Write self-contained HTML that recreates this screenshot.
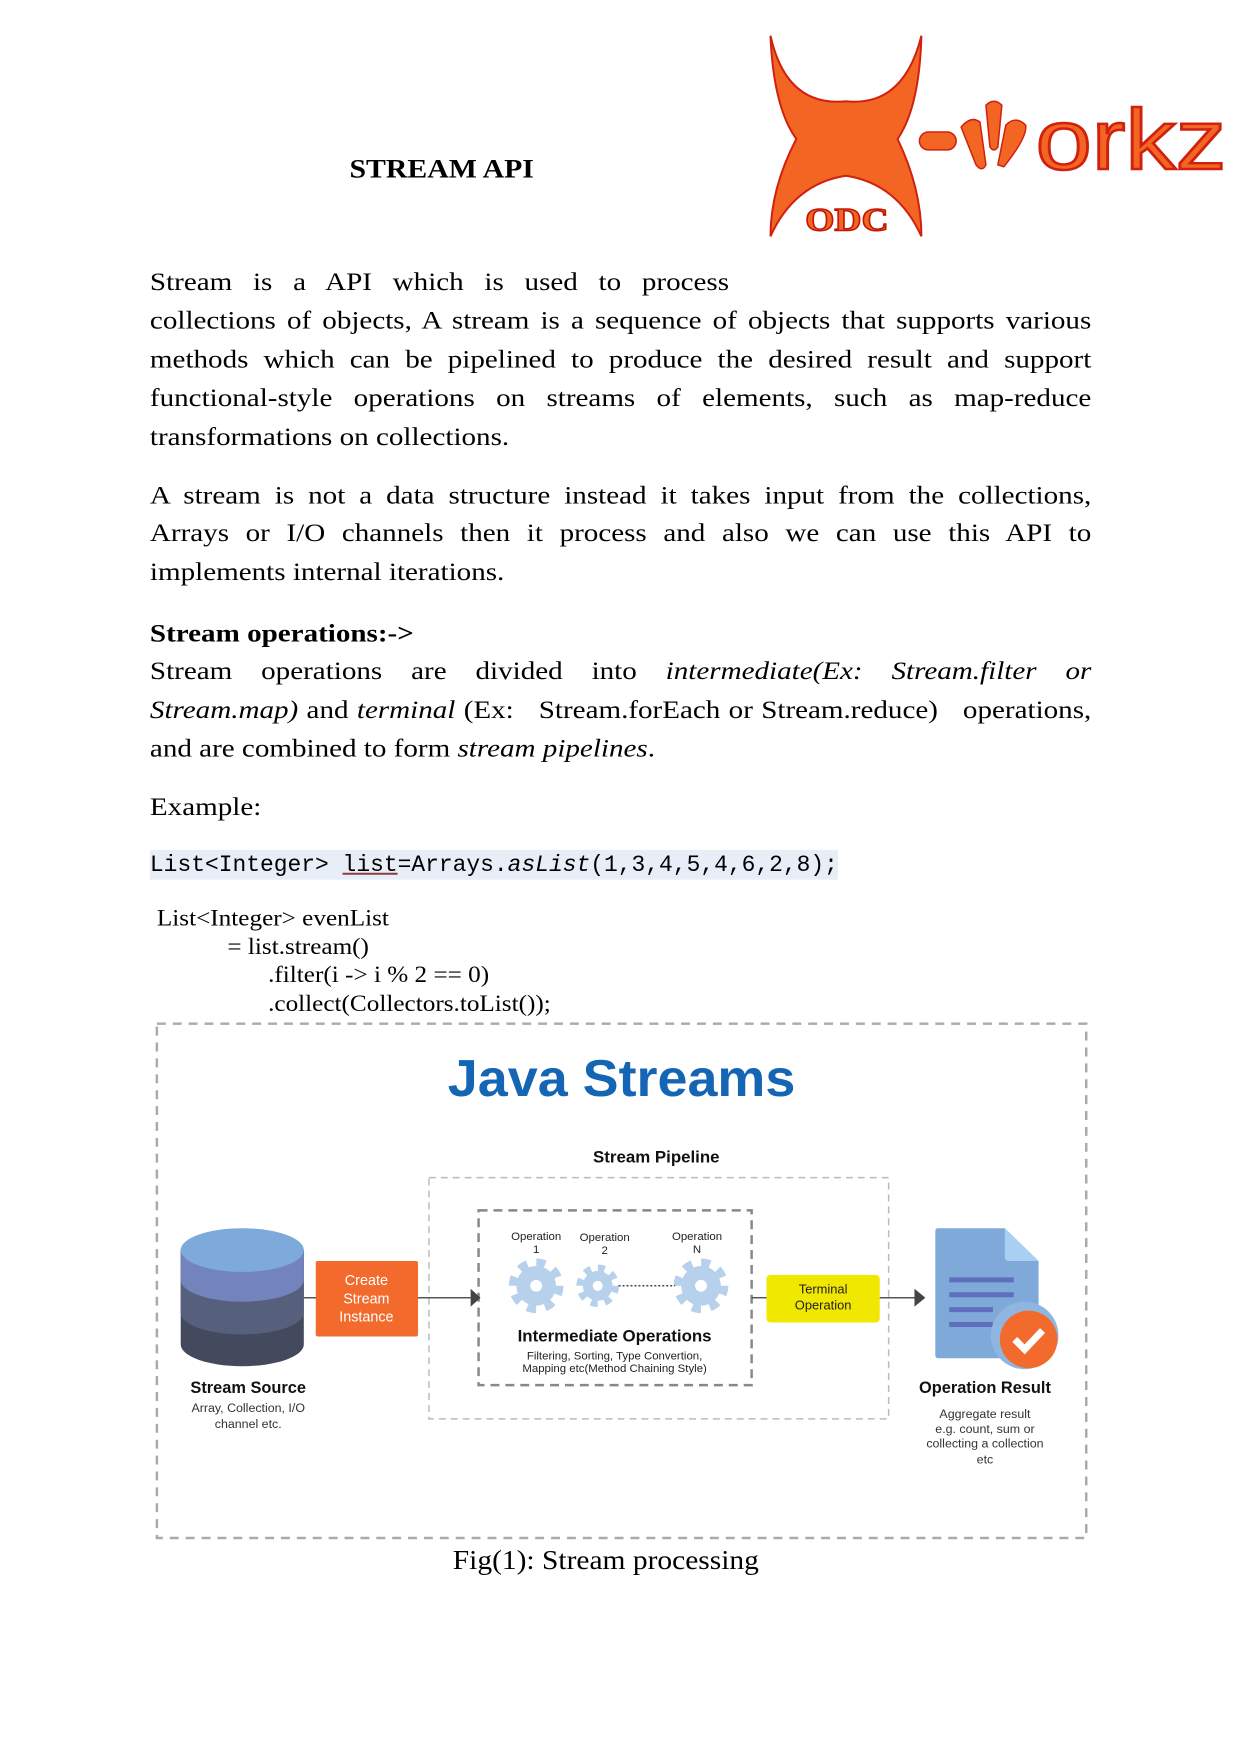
<!DOCTYPE html>
<html><head><meta charset="utf-8"><style>
html,body{margin:0;padding:0;background:#fff}
body{width:1241px;height:1755px;position:relative;overflow:hidden;font-family:"Liberation Serif",serif;color:#000}
#w{position:absolute;left:0;top:0;width:1250px;height:1768px;transform-origin:0 0;transform:scale(0.9929)}
.l{position:absolute;left:151px;width:842px;font-size:26px;line-height:30px;white-space:nowrap;transform-origin:0 0;transform:scaleX(1.126)}
.j{text-align:justify;text-align-last:justify;white-space:normal}
.c{position:absolute;font-size:23.5px;line-height:28px;white-space:nowrap;transform-origin:0 0;transform:scaleX(1.08)}
svg text{font-family:"Liberation Sans",sans-serif}
</style></head><body><div id="w">

<div style="position:absolute;left:352px;top:155px;font-size:27px;font-weight:bold;line-height:30px;transform-origin:0 0;transform:scaleX(1.11);white-space:nowrap">STREAM API</div>

<svg style="position:absolute;left:0;top:0" width="1250" height="260">
<path d="M776 36 Q792 108 852 102 Q910 108 928 36 Q926 108 904 140 Q928 190 928 238 Q904 185 852 177 Q800 185 776 238 Q776 190 802 140 Q779 108 776 36Z" fill="#f26522" stroke="#d02010" stroke-width="2"/>
<text x="853" y="232" text-anchor="middle" font-size="33" font-weight="bold" style="font-family:'Liberation Serif',serif" fill="#f26522" stroke="#c01808" stroke-width="1.5" textLength="84" lengthAdjust="spacingAndGlyphs">ODC</text>
<rect x="926" y="133" width="37" height="18" rx="9" fill="#f26522" stroke="#d02010" stroke-width="1.5"/>
<path d="M968 128 Q978 116 987 123 L993 166 Q989 174 983 166 Z" fill="#f26522" stroke="#d02010" stroke-width="1.5"/>
<path d="M993 106 Q1001 98 1009 106 L1005 148 Q1001 154 997 148 Z" fill="#f26522" stroke="#d02010" stroke-width="1.5"/>
<path d="M1005 166 L1013 126 Q1023 116 1033 126 Q1035 138 1011 168 Z" fill="#f26522" stroke="#d02010" stroke-width="1.5"/>
<text x="1043" y="170" font-size="86" textLength="192" lengthAdjust="spacingAndGlyphs" fill="#f26522" stroke="#d02010" stroke-width="2.5">orkz</text>
</svg>

<div class="l j" style="top:269px;width:518px">Stream is a API which is used to process</div>
<div class="l j" style="top:308px">collections of objects, A stream is a sequence of objects that supports various</div>
<div class="l j" style="top:347px">methods which can be pipelined to produce the desired result and support</div>
<div class="l j" style="top:386px">functional-style operations on streams of elements, such as map-reduce</div>
<div class="l" style="top:425px">transformations on collections.</div>

<div class="l j" style="top:484px">A stream is not a data structure instead it takes input from the collections,</div>
<div class="l j" style="top:522px">Arrays or I/O channels then it process and also we can use this API to</div>
<div class="l" style="top:561px">implements internal iterations.</div>

<div class="l" style="top:623px;font-weight:bold">Stream operations:-&gt;</div>
<div class="l j" style="top:661px">Stream operations are divided into <i>intermediate(Ex: Stream.filter or</i></div>
<div class="l j" style="top:700px"><i>Stream.map)</i> and <i>terminal</i> (Ex: &nbsp; Stream.forEach or Stream.reduce) &nbsp; operations,</div>
<div class="l" style="top:739px">and are combined to form <i>stream pipelines</i>.</div>

<div class="l" style="top:798px">Example:</div>

<div style="position:absolute;left:151px;top:856px;width:693px;height:30px;background:#e8eef7"></div>
<div style="position:absolute;left:151px;top:856px;font-family:'Liberation Mono',monospace;font-size:23px;line-height:30px;white-space:nowrap;transform-origin:0 0;transform:scaleX(1.004)">List&lt;Integer&gt; <u style="text-decoration-color:#8b3a3a">list</u>=Arrays.<i>asList</i>(1,3,4,5,4,6,2,8);</div>

<div class="c" style="left:158px;top:911px">List&lt;Integer&gt; evenList</div>
<div class="c" style="left:229px;top:940px">= list.stream()</div>
<div class="c" style="left:270px;top:968px">.filter(i -&gt; i % 2 == 0)</div>
<div class="c" style="left:270px;top:997px">.collect(Collectors.toList());</div>

<svg style="position:absolute;left:0;top:0" width="1250" height="1768">
<rect x="158" y="1031" width="936" height="518" fill="none" stroke="#aaa" stroke-width="2.5" stroke-dasharray="9 7"/>
<text x="626" y="1104" text-anchor="middle" font-size="52" font-weight="bold" fill="#1565b5" textLength="350" lengthAdjust="spacingAndGlyphs">Java Streams</text>
<text x="661" y="1171" text-anchor="middle" font-size="17" font-weight="bold" fill="#111">Stream Pipeline</text>
<rect x="432" y="1186" width="463" height="243" fill="none" stroke="#bbb" stroke-width="1.5" stroke-dasharray="7 5"/>
<rect x="482" y="1219" width="275" height="176" fill="none" stroke="#888" stroke-width="2.5" stroke-dasharray="9 6"/>

<path d="M182 1259 L182 1354 A62 22 0 0 0 306 1354 L306 1259Z" fill="#434a5e"/>
<path d="M182 1259 L182 1322 A62 22 0 0 0 306 1322 L306 1259Z" fill="#56607d"/>
<path d="M182 1259 L182 1289 A62 22 0 0 0 306 1289 L306 1259Z" fill="#7384bd"/>
<ellipse cx="244" cy="1259" rx="62" ry="22" fill="#7eaadb"/>

<line x1="306" y1="1307" x2="474" y2="1307" stroke="#555" stroke-width="1.5"/>
<path d="M474 1298 L484 1307 L474 1316Z" fill="#444"/>
<rect x="318" y="1270" width="103" height="76" rx="2" fill="#f26b2d"/>
<text fill="#fff" font-size="14.5" text-anchor="middle"><tspan x="369" y="1294">Create</tspan><tspan x="369" y="1313">Stream</tspan><tspan x="369" y="1331">Instance</tspan></text>

<text fill="#222" font-size="11.5" text-anchor="middle"><tspan x="540" y="1249">Operation</tspan><tspan x="540" y="1262">1</tspan><tspan x="609" y="1250">Operation</tspan><tspan x="609" y="1263">2</tspan><tspan x="702" y="1249">Operation</tspan><tspan x="702" y="1262">N</tspan></text>
<g fill="#b7d0ec">
<circle cx="540" cy="1295" r="20"/><circle cx="540" cy="1295" r="23" fill="none" stroke="#b7d0ec" stroke-width="9" stroke-dasharray="9 9.06"/>
<circle cx="602" cy="1295" r="15"/><circle cx="602" cy="1295" r="18" fill="none" stroke="#b7d0ec" stroke-width="7" stroke-dasharray="7 7.14"/>
<circle cx="706" cy="1295" r="20"/><circle cx="706" cy="1295" r="23" fill="none" stroke="#b7d0ec" stroke-width="9" stroke-dasharray="9 9.06"/>
</g>
<circle cx="540" cy="1295" r="6" fill="#fff"/><circle cx="602" cy="1295" r="5" fill="#fff"/><circle cx="706" cy="1295" r="6" fill="#fff"/>
<line x1="623" y1="1295" x2="680" y2="1295" stroke="#444" stroke-width="1.5" stroke-dasharray="2 2"/>
<text x="619" y="1351" text-anchor="middle" font-size="17" font-weight="bold" fill="#111">Intermediate Operations</text>
<text fill="#222" font-size="11.5" text-anchor="middle"><tspan x="619" y="1369">Filtering, Sorting, Type Convertion,</tspan><tspan x="619" y="1382">Mapping etc(Method Chaining Style)</tspan></text>

<line x1="757" y1="1307" x2="772" y2="1307" stroke="#555" stroke-width="1.5"/>
<rect x="772" y="1284" width="114" height="48" rx="4" fill="#f0e800"/>
<text fill="#222" font-size="13" text-anchor="middle"><tspan x="829" y="1303">Terminal</tspan><tspan x="829" y="1319">Operation</tspan></text>
<line x1="886" y1="1307" x2="922" y2="1307" stroke="#555" stroke-width="1.5"/>
<path d="M921 1298 L932 1307 L921 1316Z" fill="#444"/>

<path d="M945 1237 L1012 1237 L1046 1270 L1046 1368 L945 1368 Q942 1368 942 1365 L942 1240 Q942 1237 945 1237Z" fill="#7ea9d9"/>
<path d="M1012 1237 L1046 1270 L1016 1270 Q1012 1270 1012 1266Z" fill="#a9d0f3"/>
<g stroke="#5f6ebd" stroke-width="5"><line x1="956" y1="1289" x2="1021" y2="1289"/><line x1="956" y1="1304" x2="1021" y2="1304"/><line x1="956" y1="1319" x2="1000" y2="1319"/><line x1="956" y1="1334" x2="1000" y2="1334"/></g>
<circle cx="1032" cy="1345" r="34" fill="#8fb6e0"/>
<circle cx="1036" cy="1349" r="29" fill="#f26b2d"/>
<path d="M1022 1349 L1032 1359 L1050 1340" fill="none" stroke="#fff" stroke-width="7"/>

<text x="250" y="1403" text-anchor="middle" font-size="16.5" font-weight="bold" fill="#111">Stream Source</text>
<text fill="#333" font-size="12.5" text-anchor="middle"><tspan x="250" y="1422">Array, Collection, I/O</tspan><tspan x="250" y="1438">channel etc.</tspan></text>
<text x="992" y="1403" text-anchor="middle" font-size="16.5" font-weight="bold" fill="#111">Operation Result</text>
<text fill="#333" font-size="12.5" text-anchor="middle"><tspan x="992" y="1428">Aggregate result</tspan><tspan x="992" y="1443">e.g. count, sum or</tspan><tspan x="992" y="1458">collecting a collection</tspan><tspan x="992" y="1474">etc</tspan></text>
</svg>

<div style="position:absolute;left:456px;top:1557px;font-size:28px;line-height:30px;white-space:nowrap;transform-origin:0 0;transform:scaleX(1.06)">Fig(1): Stream processing</div>
</div></body></html>
